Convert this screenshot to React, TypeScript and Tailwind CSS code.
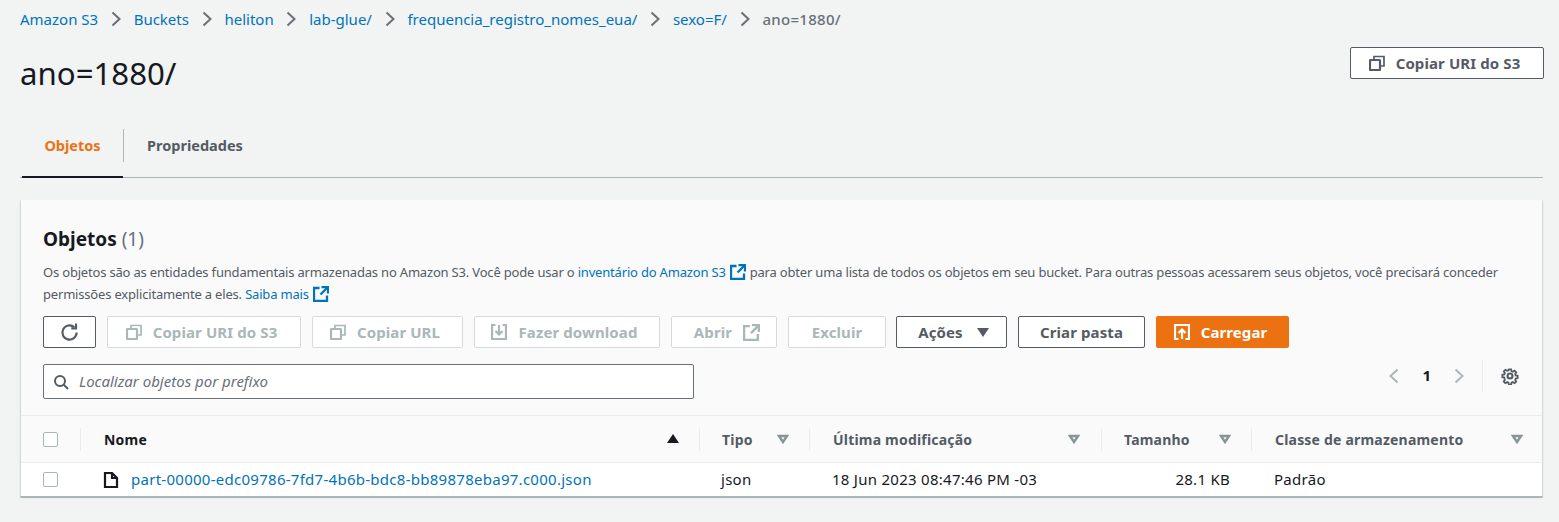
import type { ReactNode } from "react";

const crumbs = ["Amazon S3", "Buckets", "heliton", "lab-glue/", "frequencia_registro_nomes_eua/", "sexo=F/"];
const cols = "grid grid-cols-[60px_619px_110px_292px_150px_1fr]";

function Chevron() {
  return (
    <svg viewBox="0 0 12 16" className="mx-[11.75px] h-4 w-3 text-[#687078]" fill="none" stroke="currentColor" strokeWidth="2">
      <path d="M2.500 1.500 9.500 8l-7 6.500" />
    </svg>
  );
}

function CopyIcon() {
  return (
    <svg viewBox="0 0 16 16" className="h-4 w-4" fill="none" stroke="currentColor" strokeWidth="2.200">
      <rect x="1" y="5" width="10" height="10" rx="0.5" />
      <path d="M5 5V1.500h10V11h-4" strokeWidth="1.700" />
    </svg>
  );
}

function ExternalIcon({ className }: { className: string }) {
  return (
    <svg viewBox="0 0 16 16" className={className} fill="none" stroke="currentColor" strokeWidth="2.300">
      <path d="M6.500 2H1v13h13V9.500" />
      <path d="M8.500 1H15v6.500M15 1 7.500 8.500" />
    </svg>
  );
}

function SortDown() {
  return (
    <svg viewBox="0 0 12 10" className="h-[10px] w-3 text-[#879596]" fill="none" stroke="currentColor" strokeWidth="2.500">
      <path d="M2 2h8L6 8z" />
    </svg>
  );
}

function Btn({ w, off, children }: { w: string; off?: boolean; children: ReactNode }) {
  return (
    <button
      className={`flex h-8 items-center justify-center gap-[11px] rounded-[2px] border text-[15px] font-bold tracking-[0.1px] ${w} ${
        off ? "border-[#d5dbdb] bg-white text-[#aab7b8]" : "border-[#545b64] bg-white text-[#545b64]"
      }`}
    >
      {children}
    </button>
  );
}

function Th({ label, dark, end, pl }: { label: string; dark?: boolean; end: string; pl: string }) {
  return (
    <div className={`relative flex h-[46px] items-center pt-px ${pl}`}>
      <span className={`text-sm font-bold tracking-[0.2px] ${dark ? "text-[#16191f]" : "text-[#545b64]"}`}>{label}</span>
      <span className={`absolute top-[18px] ${end}`}>
        {dark ? <span className="block h-0 w-0 border-x-[6px] border-b-[9px] border-x-transparent border-b-[#16191f]" /> : <SortDown />}
      </span>
      <span className="absolute right-0 top-[12px] h-[23px] w-px bg-[#eaeded]" />
    </div>
  );
}

function Check() {
  return <span className="block h-[15px] w-[15px] rounded-[2px] border border-[#aab7b8] bg-white" />;
}

export default function App() {
  return (
    <div className="h-[522px] w-[1559px] overflow-hidden bg-[#f2f3f3] font-['Noto_Sans',sans-serif] text-[15px] text-[#16191f]">
      <div className="px-5 pt-[9px]">
        <nav className="flex h-5 items-center text-[#0073bb]">
          {crumbs.map((c) => (
            <span key={c} className="flex items-center">
              {c}
              <Chevron />
            </span>
          ))}
          <span className="font-medium tracking-[0.3px] text-[#687078]">ano=1880/</span>
        </nav>

        <div className="mt-[17px] flex items-start justify-between">
          <h1 className="text-[31.2px] leading-[54px] font-normal">ano=1880/</h1>
          <Btn w="mr-[-5px] mt-[1px] w-[194px] pr-[5px]">
            <CopyIcon />
            Copiar URI do S3
          </Btn>
        </div>

        <div className="mt-[29px] flex h-[49px] w-[1523px] border-b border-[#aab7b8] pl-[2px] text-[14.5px]">
          <div className="flex h-[49px] w-[101px] items-start justify-center border-b-2 border-[#16191f] font-bold text-[#ec7211]">
            <span className="flex h-[33px] items-center">Objetos</span>
          </div>
          <div className="h-[33px] w-px bg-[#aab7b8]" />
          <div className="flex h-[33px] items-center pl-[23px] font-bold text-[#545b64]">Propriedades</div>
        </div>

        <section className="mt-[22px] w-[1523px] rounded-[1px] border-x border-b border-x-[#d5dbdb] border-b-[#aab7b8] bg-[#fafafa] shadow-[0_1px_1px_0_rgba(0,28,36,0.3)]">
          <div className="px-[22px] pt-[25px]">
            <h2 className="text-[19px] leading-[28px] font-bold">
              Objetos <span className="font-normal text-[#687078]">(1)</span>
            </h2>
            <p className="mt-[8px] text-[13px] leading-[22px] tracking-[-0.185px] text-[#545b64]">
              Os objetos são as entidades fundamentais armazenadas no Amazon S3. Você pode usar o{" "}
              <span className="text-[#0073bb]">
                inventário do Amazon S3
                <ExternalIcon className="mx-[4px] inline h-4 w-4 align-[-3px]" />
              </span>
              para obter uma lista de todos os objetos em seu bucket. Para outras pessoas acessarem seus objetos, você precisará conceder
              <br />
              permissões explicitamente a eles.{" "}
              <span className="text-[#0073bb]">
                Saiba mais
                <ExternalIcon className="ml-[4px] inline h-4 w-4 align-[-3px]" />
              </span>
            </p>

            <div className="mt-[11px] flex gap-[11px]">
              <Btn w="w-[53px]">
                <svg viewBox="0 0 16 16" className="h-[19px] w-[19px]" fill="none" stroke="currentColor" strokeWidth="1.800">
                  <path d="M14 8a6 6 0 1 1-2-4.500" />
                  <path d="M13.500 0.500v4h-4" />
                </svg>
              </Btn>
              <Btn w="w-[194px] pr-[5px]" off>
                <CopyIcon />
                Copiar URI do S3
              </Btn>
              <Btn w="w-[151px] pr-[5px]" off>
                <CopyIcon />
                Copiar URL
              </Btn>
              <Btn w="w-[186px] pr-[5px]" off>
                <svg viewBox="0 0 16 16" className="h-4 w-4" fill="none" stroke="currentColor" strokeWidth="2.200">
                  <path d="M4.500 1H1v14h14V1h-3.500M8 1v9M4.500 7 8 10.500 11.500 7" />
                </svg>
                Fazer download
              </Btn>
              <Btn w="w-[106px] pl-[6px]" off>
                Abrir
                <ExternalIcon className="h-[17px] w-[17px]" />
              </Btn>
              <Btn w="w-[98px]" off>
                Excluir
              </Btn>
              <Btn w="ml-[-1px] w-[111px] pl-[4px]">
                Ações
                <span className="ml-[3px] h-0 w-0 border-x-[6px] border-t-[9px] border-x-transparent border-t-[#545b64]" />
              </Btn>
              <Btn w="w-[127px]">Criar pasta</Btn>
              <button className="flex h-8 w-[133px] items-center justify-center gap-[11px] rounded-[2px] bg-[#ec7211] pr-[4px] text-[15px] font-bold tracking-[0.1px] text-white">
                <svg viewBox="0 0 16 16" className="h-4 w-4" fill="none" stroke="currentColor" strokeWidth="2.200">
                  <path d="M4.500 15H1V1h14v14h-3.500M8 15V6M4.500 9 8 5.500 11.500 9" />
                </svg>
                Carregar
              </button>
            </div>

            <div className="mt-[16px] flex h-[35px] items-start justify-between">
              <div className="flex h-[35px] w-[651px] items-center gap-[10px] rounded-[2px] border border-[#687078] bg-white pl-[9px]">
                <svg viewBox="0 0 16 16" className="h-4 w-4 text-[#545b64]" fill="none" stroke="currentColor" strokeWidth="2">
                  <circle cx="7" cy="7" r="5" />
                  <path d="m10.500 10.500 4.500 4.500" />
                </svg>
                <span className="italic text-[#687078]">Localizar objetos por prefixo</span>
              </div>
              <div className="-mt-[5px] flex items-center pr-[1px]">
                <svg viewBox="0 0 12 16" className="h-4 w-3 text-[#aab7b8]" fill="none" stroke="currentColor" strokeWidth="2">
                  <path d="M9.500 1.500 2.500 8l7 6.500" />
                </svg>
                <span className="mx-[22px] text-[15px] font-bold">1</span>
                <svg viewBox="0 0 12 16" className="h-4 w-3 text-[#aab7b8]" fill="none" stroke="currentColor" strokeWidth="2">
                  <path d="M2.500 1.500 9.500 8l-7 6.500" />
                </svg>
                <span className="ml-[17px] h-[33px] w-px bg-[#eaeded]" />
                <svg viewBox="0 0 16 16" className="ml-[18px] h-[18px] w-[18px] text-[#545b64]" fill="none" stroke="currentColor" strokeWidth="1.900">
                  <circle cx="8" cy="8" r="2.200" />
                  <path d="M6.800 1h2.400l.4 2 1.400.6 1.800-1.100 1.700 1.700-1.100 1.800.6 1.400 2 .4v2.400l-2 .4-.6 1.400 1.100 1.800-1.700 1.700-1.800-1.100-1.400.6-.4 2H6.800l-.4-2-1.400-.6-1.800 1.100-1.700-1.700 1.100-1.800L2 9.600 0 9.200V6.800l2-.4.6-1.400-1.100-1.800 1.700-1.700L5 2.600 6.400 2z" transform="translate(1.200 1.200) scale(.85)" />
                </svg>
              </div>
            </div>
          </div>

          <div className={`${cols} mt-[16px] border-y border-[#eaeded]`}>
            <div className="relative flex h-[46px] items-center pl-[22px]">
              <Check />
              <span className="absolute right-0 top-[12px] h-[23px] w-px bg-[#eaeded]" />
            </div>
            <Th label="Nome" dark end="right-[21px]" pl="pl-[23px]" />
            <Th label="Tipo" end="right-[21px]" pl="pl-[22px]" />
            <Th label="Última modificação" end="right-[22px]" pl="pl-[23px]" />
            <Th label="Tamanho" end="right-[21px]" pl="pl-[22px]" />
            <div className="relative flex h-[46px] items-center pl-[23px] pt-px text-sm font-bold tracking-[0.2px] text-[#545b64]">
              Classe de armazenamento
              <span className="absolute right-[19px] top-[18px]">
                <SortDown />
              </span>
            </div>
          </div>

          <div className={`${cols} h-[33px] items-center bg-white tracking-[0.27px]`}>
            <div className="pl-[22px]">
              <Check />
            </div>
            <div className="flex items-center gap-[12px] pl-[22px] text-[#0073bb]">
              <svg viewBox="0 0 16 16" className="h-4 w-4 text-[#16191f]" fill="none" stroke="currentColor" strokeWidth="2.200">
                <path d="M2 1h7l5 5v9H2zM9 1v5h5" />
              </svg>
              part-00000-edc09786-7fd7-4b6b-bdc8-bb89878eba97.c000.json
            </div>
            <div className="pl-[21px]">json</div>
            <div className="pl-[22px]">18 Jun 2023 08:47:46 PM -03</div>
            <div className="pr-[22px] text-right">28.1 KB</div>
            <div className="pl-[22px]">Padrão</div>
          </div>
        </section>
      </div>
    </div>
  );
}
